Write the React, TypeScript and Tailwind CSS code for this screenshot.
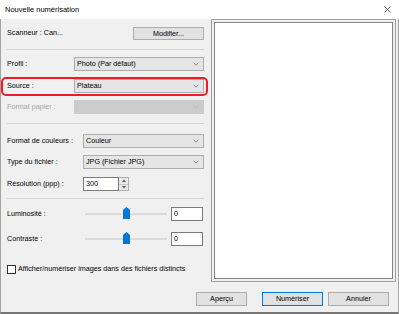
import React from 'react';

const Chevron = ({ disabled }: { disabled?: boolean }) => (
  <svg width="6" height="4" viewBox="0 0 6 4" className="shrink-0">
    <path d="M0.5 0.7 L3 3.2 L5.5 0.7" fill="none" stroke={disabled ? '#b4b4b4' : '#6b6b6b'} strokeWidth="0.8" />
  </svg>
);

const Select = ({ value, wide, disabled }: { value?: string; wide?: boolean; disabled?: boolean }) => (
  <div
    className={`flex h-[14px] items-center justify-between border pl-[2px] pr-[4px] ${
      wide ? 'w-[130px]' : 'w-[121px]'
    } ${disabled ? 'border-[#cccccc] bg-[#cccccc]' : 'border-[#adadad] bg-[#e5e5e5]'}`}
  >
    <span className="leading-none">{value}</span>
    <Chevron disabled={disabled} />
  </div>
);

const Separator = () => <div className="h-px bg-[#d4d4d4]" />;

const Slider = () => (
  <div className="grid h-[14px] w-[82px] place-items-center">
    <div className="col-start-1 row-start-1 h-[2px] w-full bg-[#dadada]" />
    <svg width="7" height="12" viewBox="0 0 7 12" className="col-start-1 row-start-1 -mt-[2px]">
      <polygon points="0,3 3.5,0 7,3 7,12 0,12" fill="#0078d7" />
    </svg>
  </div>
);

const Button = ({ label, primary, w }: { label: string; primary?: boolean; w: string }) => (
  <div
    className={`flex h-[14px] items-center justify-center border bg-[#e1e1e1] leading-none ${w} ${
      primary ? 'border-[#0078d7]' : 'border-[#adadad]'
    }`}
  >
    {label}
  </div>
);

export default function App() {
  return (
    <div
      className="flex h-[314px] w-[399px] flex-col border-x border-b-2 border-x-[#a3a3a3] border-b-[#757575] bg-[#f0f0f0] text-[7.2px] text-black"
      style={{ fontFamily: '"Liberation Sans", Arial, sans-serif' }}
    >
      {/* Title bar */}
      <div className="-mx-px flex h-[19px] shrink-0 items-center justify-between bg-white pl-[5px] pr-[8px]">
        <span className="text-[7.5px] leading-none">Nouvelle numérisation</span>
        <svg width="7" height="7" viewBox="0 0 7 7">
          <path d="M0.5 0.5 L6.5 6.5 M6.5 0.5 L0.5 6.5" stroke="#333" strokeWidth="0.8" />
        </svg>
      </div>

      <div className="flex">
        {/* Left settings column */}
        <div className="flex w-[210px] flex-col pl-[6px] pr-[7px]">
          <div className="mt-[8px] flex h-[13px] items-center justify-between">
            <span>Scanneur : Can...</span>
            <div className="flex h-[13px] w-[71px] items-center justify-center border border-[#adadad] bg-[#e1e1e1] leading-none">
              Modifier...
            </div>
          </div>

          <div className="mt-[9px]">
            <Separator />
          </div>

          <div className="mt-[7px] flex items-center justify-between">
            <span>Profil :</span>
            <Select value="Photo (Par défaut)" wide />
          </div>

          <div className="relative mt-[8px] flex items-center justify-between">
            <span>Source :</span>
            <Select value="Plateau" wide />
            <div className="pointer-events-none absolute -top-[2px] -bottom-[3px] -left-[6px] -right-[4px] rounded-[5px] border-2 border-[#ee1c25]" />
          </div>

          <div className="mt-[7px] flex items-center justify-between">
            <span className="text-[#a6a6a6]">Format papier :</span>
            <Select wide disabled />
          </div>

          <div className="mt-[9px]">
            <Separator />
          </div>

          <div className="mt-[10px] flex items-center justify-between">
            <span>Format de couleurs :</span>
            <Select value="Couleur" />
          </div>

          <div className="mt-[7px] flex items-center justify-between">
            <span>Type du fichier :</span>
            <Select value="JPG (Fichier JPG)" />
          </div>

          <div className="mt-[8px] flex items-center">
            <span className="w-[76px]">Résolution (ppp) :</span>
            <div className="flex h-[14px]">
              <div className="flex w-[36px] items-center border border-[#7a7a7a] bg-white pl-[2px] leading-none">300</div>
              <div className="flex w-[10px] flex-col border-y border-r border-[#adadad] bg-[#e9e9e9]">
                <div className="flex flex-1 items-center justify-center border-b border-[#c8c8c8]">
                  <svg width="4" height="3" viewBox="0 0 4 3">
                    <polygon points="0,3 2,0.5 4,3" fill="#555" />
                  </svg>
                </div>
                <div className="flex flex-1 items-center justify-center">
                  <svg width="4" height="3" viewBox="0 0 4 3">
                    <polygon points="0,0 2,2.5 4,0" fill="#555" />
                  </svg>
                </div>
              </div>
            </div>
          </div>

          <div className="mt-[7px]">
            <Separator />
          </div>

          <div className="mt-[8px] flex items-center">
            <span className="w-[78px]">Luminosité :</span>
            <Slider />
            <div className="ml-auto mr-px flex h-[14px] w-[32px] items-center border border-[#7a7a7a] bg-white pl-[2px] leading-none">0</div>
          </div>

          <div className="mt-[11px] flex items-center">
            <span className="w-[78px]">Contraste :</span>
            <Slider />
            <div className="ml-auto mr-px flex h-[14px] w-[32px] items-center border border-[#7a7a7a] bg-white pl-[2px] leading-none">0</div>
          </div>

          <div className="mt-[18px] flex items-center gap-[2px]">
            <div className="h-[9px] w-[9px] border border-[#333] bg-white" />
            <span>Afficher/numériser images dans des fichiers distincts</span>
          </div>
        </div>

        {/* Preview area */}
        <div className="h-[263px] w-[185px] border border-[#a0a0a0] p-[2px]">
          <div className="h-full w-full border border-[#828282] bg-white" />
        </div>
      </div>

      {/* Buttons */}
      <div className="mt-[10px] flex items-center justify-end pr-[9px]">
        <Button label="Aperçu" w="w-[51px]" />
        <div className="ml-[15px] flex gap-[5px]">
          <Button label="Numériser" primary w="w-[61px]" />
          <Button label="Annuler" w="w-[61px]" />
        </div>
      </div>
    </div>
  );
}
